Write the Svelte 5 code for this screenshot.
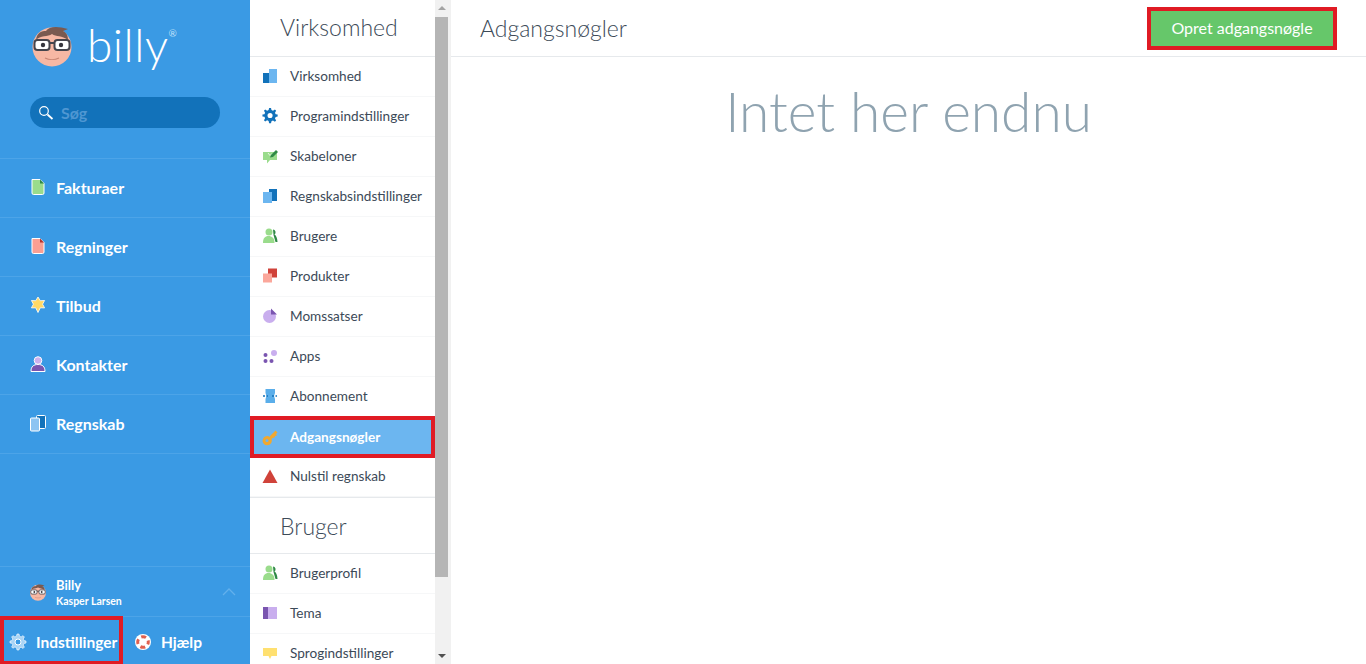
<script>
  const mainNav = [
    { label: 'Fakturaer', icon: 'invoice' },
    { label: 'Regninger', icon: 'bill' },
    { label: 'Tilbud', icon: 'star' },
    { label: 'Kontakter', icon: 'contact' },
    { label: 'Regnskab', icon: 'books' }
  ];

  const company = [
    { label: 'Virksomhed', icon: 'company' },
    { label: 'Programindstillinger', icon: 'gear' },
    { label: 'Skabeloner', icon: 'template' },
    { label: 'Regnskabsindstillinger', icon: 'ledger' },
    { label: 'Brugere', icon: 'users' },
    { label: 'Produkter', icon: 'products' },
    { label: 'Momssatser', icon: 'pie' },
    { label: 'Apps', icon: 'apps' },
    { label: 'Abonnement', icon: 'ticket' },
    { label: 'Adgangsnøgler', icon: 'key', active: true },
    { label: 'Nulstil regnskab', icon: 'warn' }
  ];

  const user = [
    { label: 'Brugerprofil', icon: 'users' },
    { label: 'Tema', icon: 'theme' },
    { label: 'Sprogindstillinger', icon: 'speech' }
  ];
</script>

{#snippet face(size)}
  <svg width={size} height={size} viewBox="0 0 44 44">
    <circle cx="22" cy="24" r="19.5" fill="#f7b8a4" />
    <path d="M6 17 C7 9 12 8 16 8 C19 3 28 3 38 6 L33 8 C37 10 38 13 38 17 C32 12 26 14 22 11 C18 14 10 12 6 17Z" fill="#7a5a50" />
    <rect x="4.500" y="17" width="15" height="10" rx="3" fill="#fff" stroke="#45454d" stroke-width="2" />
    <rect x="24.500" y="17" width="15" height="10" rx="3" fill="#fff" stroke="#45454d" stroke-width="2" />
    <path d="M19.500 20h5" stroke="#45454d" stroke-width="2" />
    <circle cx="13" cy="22" r="2.200" fill="#35353d" />
    <circle cx="31" cy="22" r="2.200" fill="#35353d" />
    <path d="M15 35 C19 37 25 37 29 35" stroke="#c98572" stroke-width="1.2" fill="none" />
  </svg>
{/snippet}

{#snippet icon(name)}
  <svg class="ico" width="18" height="18" viewBox="0 0 18 18">
    {#if name === 'invoice'}
      <path d="M3 1.500h8l4 4V15a1.500 1.500 0 0 1-1.500 1.500h-9A1.500 1.500 0 0 1 3 15Z" fill="#9adc8c" stroke="#fff" />
      <path d="M11 1.500v4h4Z" fill="#2f8a46" />
    {:else if name === 'bill'}
      <path d="M3 1.500h8l4 4V15a1.500 1.500 0 0 1-1.500 1.500h-9A1.500 1.500 0 0 1 3 15Z" fill="#fb9f93" stroke="#fff" />
      <path d="M11 1.500v4h4Z" fill="#b5322c" />
    {:else if name === 'star'}
      <path d="M9 1l2.300 3.700 4.300-.2-2 3.700 2 3.700-4.300-.1L9 16.500l-2.300-4.700-4.300.1 2-3.700-2-3.700 4.300.2Z" fill="#ffd966" stroke="#fff" stroke-width=".8" />
    {:else if name === 'contact'}
      <circle cx="9" cy="5.500" r="3.800" fill="#cdb1ee" stroke="#fff" />
      <path d="M2 16.500c0-5 2.500-7 7-7s7 2 7 7Z" fill="#7a55b0" stroke="#fff" />
    {:else if name === 'books'}
      <rect x="7.500" y="1.500" width="9" height="13" rx="1" fill="#1272ba" stroke="#fff" />
      <rect x="1.500" y="4" width="9" height="13" rx="1" fill="#8cc4f2" stroke="#fff" />
    {:else if name === 'company'}
      <rect x="1" y="6" width="6" height="10" fill="#1272ba" />
      <rect x="7" y="2" width="8" height="14" fill="#6cb6f0" />
    {:else if name === 'gear'}
      <path d="M8 1h2l.5 2.200 1.600.7 2-1.200 1.300 1.300-1.200 2 .7 1.600 2.100.4v2l-2.100.5-.7 1.600 1.200 2-1.300 1.300-2-1.200-1.600.7L10 17H8l-.5-2.300-1.600-.7-2 1.200-1.300-1.300 1.200-2-.7-1.600L1 10V8l2.100-.4.700-1.600-1.200-2 1.300-1.300 2 1.200 1.600-.7ZM9 6.300a2.700 2.700 0 1 0 0 5.400 2.700 2.700 0 0 0 0-5.400Z" fill="#1272ba" fill-rule="evenodd" transform="translate(-.5 0) scale(.95)" />
    {:else if name === 'template'}
      <path d="M1 5h14v8H8l-3 3.500V13H1Z" fill="#9adc8c" />
      <path d="M6 6l2 2.500 2-2" fill="none" stroke="#e8f8e4" stroke-width="1" />
      <path d="M8 10.500l1-2.500 5-5 2 2-5 5Z" fill="#2f8a46" />
    {:else if name === 'ledger'}
      <rect x="7" y="2" width="8" height="12" fill="#1272ba" />
      <rect x="1" y="5" width="9" height="11" fill="#6cb6f0" />
    {:else if name === 'users'}
      <path d="M11 2.500a2.800 2.800 0 0 1 1.500 5c1.800 1 2.800 3.500 3 7.500h-2l-2-7Z" fill="#2f8a46" />
      <circle cx="7" cy="5" r="3.500" fill="#9adc8c" />
      <path d="M1 16c0-5 2-7 5.500-7S12.500 11 12.500 16Z" fill="#9adc8c" />
    {:else if name === 'products'}
      <rect x="6" y="1.500" width="9" height="9" fill="#d0423a" />
      <rect x="1" y="6.500" width="9" height="9" fill="#fba79b" />
    {:else if name === 'pie'}
      <circle cx="7.500" cy="9.500" r="6.500" fill="#c9aeee" />
      <path d="M9 1.500l6 6H9Z" fill="#7a55b0" />
    {:else if name === 'apps'}
      <circle cx="3.500" cy="8" r="2" fill="#7a55b0" />
      <circle cx="3.500" cy="14" r="2" fill="#7a55b0" />
      <circle cx="9.500" cy="14" r="2" fill="#7a55b0" />
      <circle cx="12" cy="6" r="3" fill="#c9aeee" />
    {:else if name === 'ticket'}
      <path d="M3.500 2h9.500v4l-1 3 1 3v4H3.500v-4l1-3-1-3Z" fill="#5aaeea" />
      <path d="M1 9h5M10 9h5" stroke="#1272ba" stroke-width="1.500" stroke-dasharray="2 1.500" />
    {:else if name === 'key'}
      <path d="M8 8L13.500 2.500l2 2-1.500 1.500 1 1.500-2 .5-.5 1.500-2 .5-1 1a4.600 4.600 0 1 1-1.500-2Z" fill="#f0a830" />
      <circle cx="5" cy="12.500" r="1.500" fill="#6cb6f0" />
    {:else if name === 'warn'}
      <path d="M8 2.500L15.500 16H.5Z" fill="#d0423a" />
    {:else if name === 'theme'}
      <rect x="1" y="3" width="5" height="12" fill="#7a55b0" />
      <rect x="6" y="3" width="9" height="12" fill="#c9aeee" />
    {:else if name === 'speech'}
      <path d="M1 4h14v8H9.500L8 15l-1.500-3H1Z" fill="#ffe070" />
    {/if}
  </svg>
{/snippet}

<div class="app">
  <aside class="sidebar">
    <div class="logo">
      {@render face(44)}
      <span class="word">billy</span><sup>®</sup>
    </div>
    <div class="search">
      <svg width="16" height="16" viewBox="0 0 16 16">
        <circle cx="6" cy="6" r="4.300" fill="none" stroke="#fff" stroke-width="1.200" />
        <path d="M9.500 9.500L14.500 14" stroke="#fff" stroke-width="1.800" />
      </svg>
      <span>Søg</span>
    </div>

    <nav class="main-nav">
      {#each mainNav as item}
        <div class="nav-item">
          {@render icon(item.icon)}
          <span>{item.label}</span>
        </div>
      {/each}
    </nav>

    <div class="org">
      {@render face(18)}
      <div class="org-names">
        <span class="org-name">Billy</span>
        <span class="org-user">Kasper Larsen</span>
      </div>
      <svg class="chev" width="14" height="8" viewBox="0 0 14 8">
        <path d="M1 7l6-6 6 6" fill="none" stroke="#62b0ec" stroke-width="1.300" />
      </svg>
    </div>
    <div class="foot">
      <div class="foot-btn settings">
        <svg width="18" height="18" viewBox="0 0 18 18">
          <path d="M8 1h2l.5 2.200 1.600.7 2-1.200 1.300 1.300-1.200 2 .7 1.600 2.100.4v2l-2.100.5-.7 1.600 1.200 2-1.300 1.300-2-1.200-1.600.7L10 17H8l-.5-2.300-1.600-.7-2 1.200-1.300-1.300 1.200-2-.7-1.600L1 10V8l2.100-.4.700-1.600-1.200-2 1.300-1.300 2 1.200 1.600-.7Z" fill="#a9d4f5" stroke="#fff" stroke-width=".6" />
          <circle cx="9" cy="9" r="3" fill="#3a9ae4" stroke="#fff" />
        </svg>
        <span>Indstillinger</span>
      </div>
      <div class="foot-btn help">
        <svg width="16" height="16" viewBox="0 0 16 16">
          <circle cx="8" cy="8" r="8" fill="#fff" />
          <circle cx="8" cy="8" r="5.300" fill="none" stroke="#e0604f" stroke-width="3" stroke-dasharray="5 3.330" stroke-dashoffset="2.500" />
          <circle cx="8" cy="8" r="3" fill="#fff" />
        </svg>
        <span>Hjælp</span>
      </div>
    </div>
  </aside>

  <div class="settings-col">
    <div class="settings-list">
      <h2>Virksomhed</h2>
      {#each company as item}
        <div class="row" class:active={item.active}>
          {@render icon(item.icon)}
          <span>{item.label}</span>
        </div>
      {/each}
      <h2 class="second">Bruger</h2>
      {#each user as item}
        <div class="row">
          {@render icon(item.icon)}
          <span>{item.label}</span>
        </div>
      {/each}
    </div>
    <div class="scrollbar">
      <i class="arrow up"></i>
      <div class="thumb"></div>
      <i class="arrow down"></i>
    </div>
  </div>

  <main class="content">
    <header class="top">
      <h1>Adgangsnøgler</h1>
      <button class="create">Opret adgangsnøgle</button>
    </header>
    <p class="empty">Intet her endnu</p>
  </main>
</div>

<style>
  :global(body) {
    margin: 0;
    font-family: "Lato", "Open Sans", sans-serif;
    background: #fff;
    overflow: hidden;
  }

  .app {
    display: flex;
    height: 664px;
    overflow: hidden;
  }

  .sidebar {
    width: 250px;
    flex: none;
    background: #3a9ae4;
    color: #fff;
    display: flex;
    flex-direction: column;
  }

  .logo {
    height: 97px;
    padding: 0 0 0 30px;
    box-sizing: border-box;
    display: flex;
    align-items: flex-start;
  }

  .logo svg {
    margin-top: 23px;
  }

  .word {
    font-size: 46px;
    font-weight: 300;
    line-height: 56px;
    margin: 17px 0 0 13px;
    letter-spacing: 0.5px;
  }

  .logo sup {
    font-size: 10px;
    line-height: 12px;
    margin-top: 27px;
    color: #bfe0fa;
  }

  .search {
    margin: 0 30px;
    height: 31px;
    border-radius: 16px;
    background: #1272ba;
    display: flex;
    align-items: center;
    gap: 7px;
    padding-left: 8px;
    font-size: 16px;
    color: #4f97d2;
    font-weight: 700;
  }

  .main-nav {
    margin-top: 30px;
    border-top: 1px solid #4ca4e8;
  }

  .nav-item {
    height: 56px;
    border-bottom: 1px solid #4ca4e8;
    display: flex;
    align-items: center;
    gap: 9px;
    padding: 0 0 2px 29px;
    font-size: 16px;
    font-weight: 700;
  }

  .org {
    margin-top: auto;
    height: 49px;
    border-top: 1px solid #4ca4e8;
    border-bottom: 1px solid #4ca4e8;
    display: flex;
    align-items: center;
    padding-left: 29px;
    gap: 9px;
  }

  .org-names {
    display: flex;
    flex-direction: column;
    gap: 2px;
    padding-top: 2px;
  }

  .org-name {
    font-size: 13px;
    font-weight: 700;
    line-height: 15px;
  }

  .org-user {
    font-size: 10.500px;
    font-weight: 700;
    line-height: 13px;
  }

  .chev {
    margin-left: auto;
    margin-right: 14px;
  }

  .foot {
    height: 47px;
    display: flex;
    align-items: stretch;
  }

  .foot-btn {
    display: flex;
    align-items: center;
    gap: 9px;
    font-size: 15.500px;
    font-weight: 700;
  }

  .settings {
    width: 123px;
    box-sizing: border-box;
    border: 4px solid #e01b24;
    padding: 2px 0 0 5px;
    margin-top: -1px;
    height: 49px;
    white-space: nowrap;
  }

  .help {
    padding: 2px 0 0 12px;
    gap: 10px;
  }

  .settings-col {
    width: 201px;
    flex: none;
    display: flex;
  }

  .settings-list {
    width: 185px;
    flex: none;
    height: 664px;
    overflow: hidden;
    background: #fff;
  }

  .settings-list h2 {
    margin: 0;
    height: 56px;
    border-bottom: 1px solid #e6e9ec;
    font-size: 23px;
    font-weight: 300;
    line-height: 55px;
    padding-left: 30px;
    color: #3c4a58;
  }

  .settings-list h2.second {
    height: 55px;
    line-height: 56px;
    border-top: 1px solid #e6e9ec;
  }

  .row {
    height: 40px;
    box-sizing: border-box;
    border-bottom: 1px solid #f6f7f8;
    display: flex;
    align-items: center;
    padding: 0 0 2px 12px;
    gap: 10px;
    font-size: 13.600px;
    color: #3c4a58;
    white-space: nowrap;
  }

  .row.active {
    background: #6cb6f0;
    color: #fff;
    font-weight: 700;
    border: 4px solid #e01b24;
    height: 42px;
    margin: -1px 0;
    padding: 0 0 0 8px;
    position: relative;
  }

  .scrollbar {
    width: 16px;
    flex: none;
    background: #f1f1f1;
    display: flex;
    flex-direction: column;
    align-items: flex-start;
  }

  .thumb {
    width: 13px;
    height: 560px;
    background: #b5b5b5;
  }

  .arrow {
    display: block;
    width: 0;
    height: 0;
    margin-left: 3px;
    border-left: 4px solid transparent;
    border-right: 4px solid transparent;
  }

  .arrow.up {
    border-bottom: 4px solid #a3a3a3;
    margin-top: 6px;
    margin-bottom: 7px;
  }

  .arrow.down {
    border-top: 4px solid #505050;
    margin-top: auto;
    margin-bottom: 6px;
  }

  .content {
    flex: 1;
    min-width: 0;
  }

  .top {
    height: 56px;
    border-bottom: 1px solid #e6e9ec;
    display: flex;
    align-items: center;
    justify-content: space-between;
    padding: 0 29px;
  }

  .top h1 {
    margin: -1px 0 0;
    font-size: 23px;
    font-weight: 300;
    color: #3c4a58;
  }

  .create {
    width: 190px;
    height: 43px;
    border: 4px solid #e01b24;
    background: #66c76a;
    color: #fff;
    font-family: inherit;
    font-size: 16px;
    font-weight: 400;
    padding: 0 0 2px;
  }

  .empty {
    margin: 21px 0 0;
    text-align: center;
    font-size: 55px;
    line-height: 66px;
    font-weight: 300;
    color: #8fa3b0;
  }
</style>
